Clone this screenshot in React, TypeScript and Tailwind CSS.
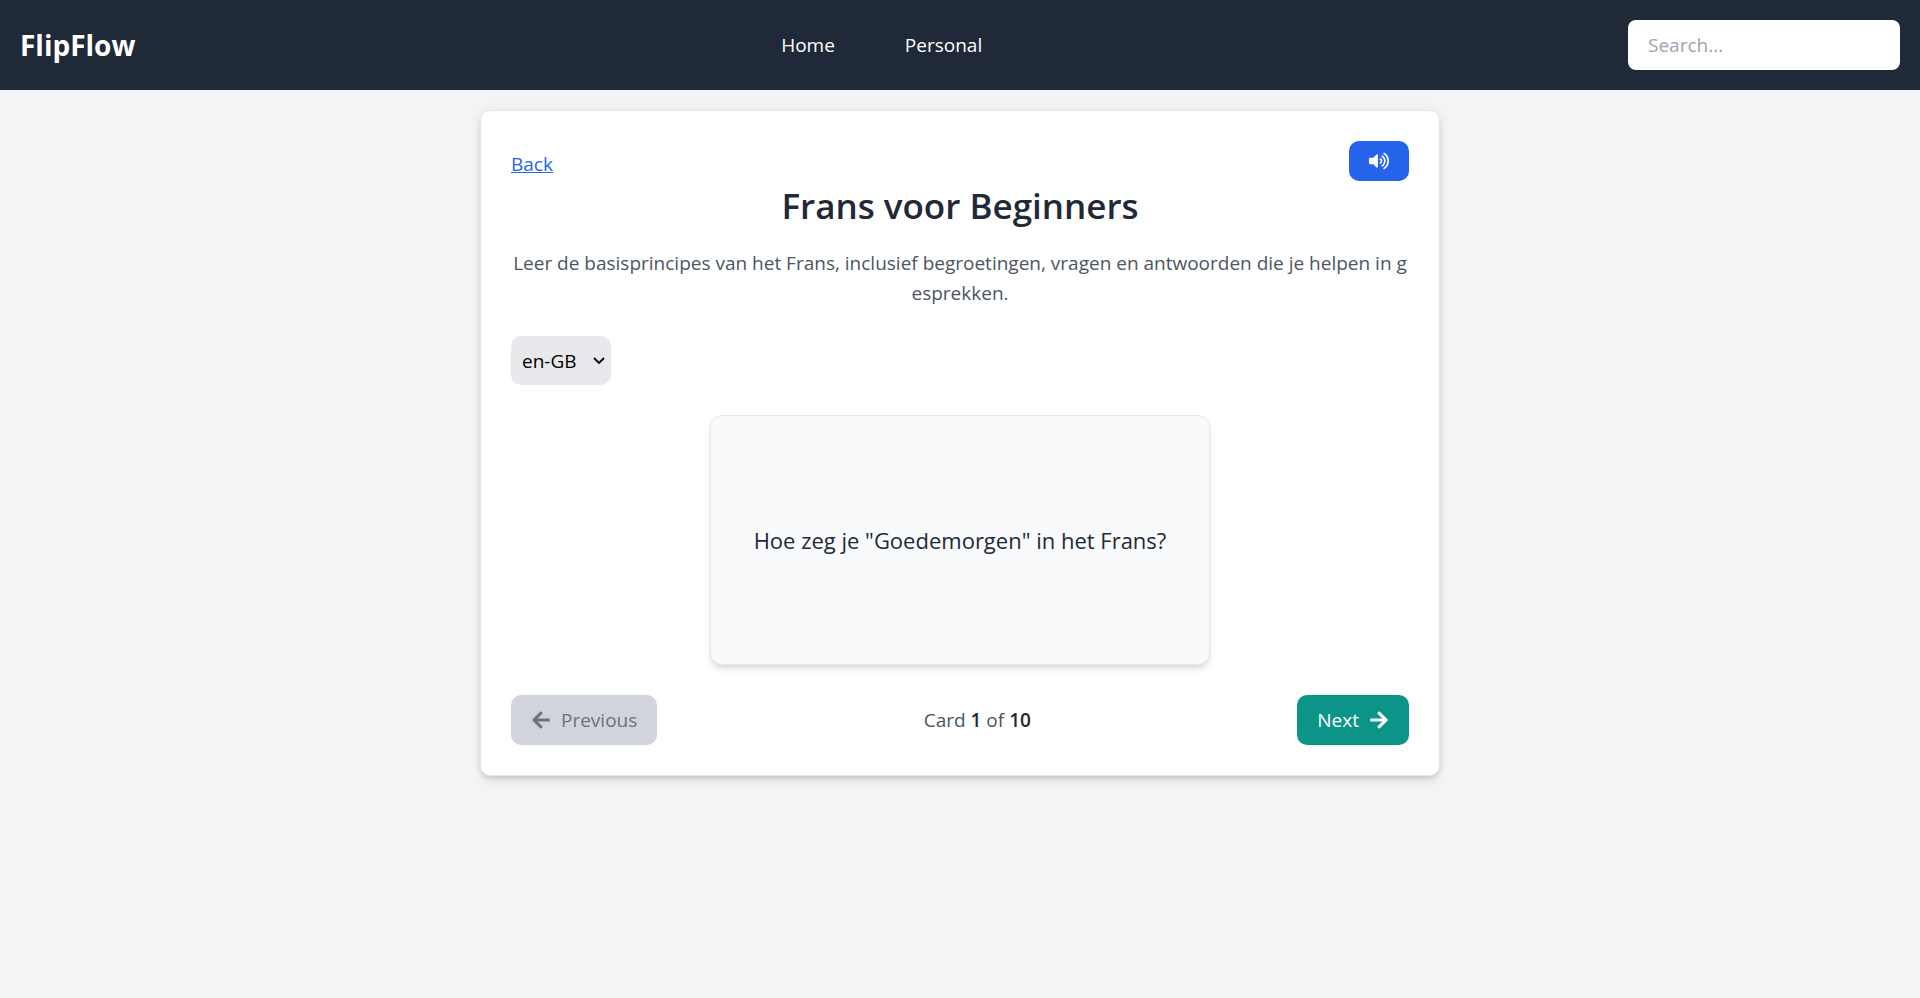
import { useState } from "react";
import { FaArrowLeft, FaArrowRight, FaVolumeUp } from "react-icons/fa";

const questions = [
  'Hoe zeg je "Goedemorgen" in het Frans?',
  'Hoe zeg je "Goedenavond" in het Frans?',
  'Hoe zeg je "Dank je wel" in het Frans?',
  'Hoe zeg je "Alsjeblieft" in het Frans?',
  'Hoe zeg je "Tot ziens" in het Frans?',
  'Hoe zeg je "Hoe gaat het?" in het Frans?',
  'Hoe zeg je "Ja" in het Frans?',
  'Hoe zeg je "Nee" in het Frans?',
  'Hoe zeg je "Sorry" in het Frans?',
  'Hoe zeg je "Welkom" in het Frans?',
];

function NavBar() {
  return (
    <nav className="flex items-center justify-between bg-[#1f2937] p-5 text-white">
      <a href="#" className="text-[28px] leading-10 font-bold">
        FlipFlow
      </a>
      <div className="flex items-center gap-[70px]">
        <a href="#home">Home</a>
        <a href="#personal">Personal</a>
      </div>
      <input
        type="text"
        aria-label="Search"
        placeholder="Search..."
        className="h-[50px] w-[272px] rounded-lg bg-white px-5 text-black outline-none placeholder:text-[#9ca3af]"
      />
    </nav>
  );
}

function LanguageSelect() {
  return (
    <div className="relative w-[100px]">
      <select
        aria-label="Language"
        className="h-[49px] w-full appearance-none rounded-[10px] bg-[#e9e9ed] pl-[11px] text-black"
      >
        <option>en-GB</option>
        <option>fr-FR</option>
        <option>nl-NL</option>
      </select>
      <svg
        viewBox="0 0 12 8"
        className="pointer-events-none absolute top-[21px] right-[6px] h-2 w-3"
        fill="none"
        stroke="black"
        strokeWidth="1.8"
      >
        <path d="M1 1l5 5 5-5" />
      </svg>
    </div>
  );
}

export default function App() {
  const [index, setIndex] = useState(0);

  return (
    <div className="min-h-screen bg-[#f3f4f6] font-['Open_Sans',sans-serif] text-[19px] leading-[30px]">
      <NavBar />
      <main className="mx-auto mt-5 w-full max-w-[960px] rounded-[10px] border border-[#e5e7eb] bg-white p-[30px] shadow-[0_5px_8px_-1px_rgba(0,0,0,0.1),0_3px_5px_-2px_rgba(0,0,0,0.1),0_0_12px_rgba(0,0,0,0.05)]">
        <div className="flex items-start justify-between">
          <a href="#back" className="mt-2 text-[#2563eb] underline">
            Back
          </a>
          <button
            type="button"
            aria-label="Read aloud"
            className="flex h-10 w-[60px] items-center justify-center rounded-[10px] bg-[#2563eb] text-white"
          >
            <FaVolumeUp size={20} />
          </button>
        </div>
        <h1 className="mt-0.5 text-center text-[35px] leading-[45px] font-semibold text-[#1f2937]">
          Frans voor Beginners
        </h1>
        <p className="mt-5 text-center text-[#4b5563]">
          Leer de basisprincipes van het Frans, inclusief begroetingen, vragen en antwoorden die je helpen in g
          <br />
          esprekken.
        </p>
        <div className="mt-7">
          <LanguageSelect />
        </div>
        <div className="mx-auto mt-[30px] flex h-[250px] max-w-[500px] items-center justify-center rounded-xl border border-[#e5e7eb] bg-[#f9fafb] text-[22px] text-[#1f2937] shadow-[0_5px_8px_-1px_rgba(0,0,0,0.1),0_3px_5px_-2px_rgba(0,0,0,0.1)]">
          {questions[index]}
        </div>
        <div className="mt-[30px] flex items-center justify-between">
          <button
            type="button"
            disabled={index === 0}
            onClick={() => setIndex(index - 1)}
            className="flex h-[50px] items-center gap-[10px] rounded-[10px] bg-[#0d9488] px-5 text-white disabled:bg-[#d1d5db] disabled:text-[#6b7280]"
          >
            <FaArrowLeft size={20} />
            Previous
          </button>
          <span className="text-[#4b5563]">
            Card <span className="font-semibold text-[#1f2937]">{index + 1}</span> of{" "}
            <span className="font-semibold text-[#1f2937]">{questions.length}</span>
          </span>
          <button
            type="button"
            disabled={index === questions.length - 1}
            onClick={() => setIndex(index + 1)}
            className="flex h-[50px] items-center gap-[10px] rounded-[10px] bg-[#0d9488] px-5 text-white disabled:bg-[#d1d5db] disabled:text-[#6b7280]"
          >
            Next
            <FaArrowRight size={20} />
          </button>
        </div>
      </main>
    </div>
  );
}
